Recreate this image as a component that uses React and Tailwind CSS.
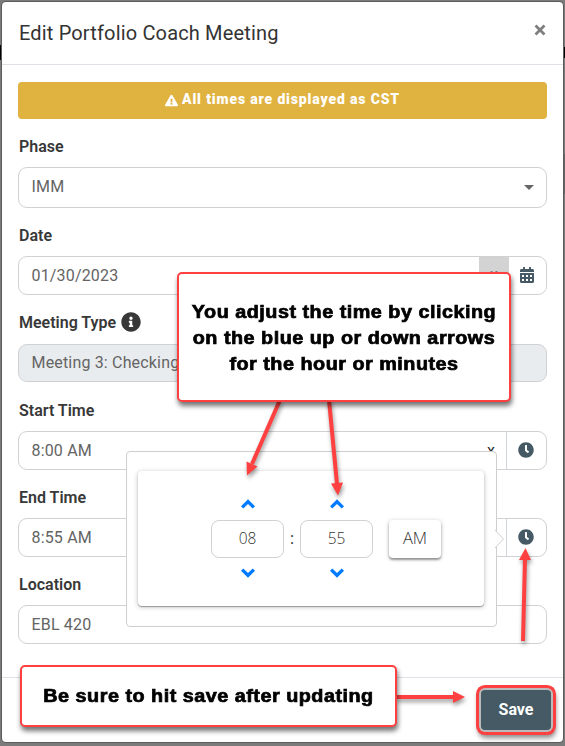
import React from 'react';
import clsx from 'clsx';
import { FaCalendarAlt, FaClock, FaExclamationTriangle, FaInfoCircle } from 'react-icons/fa';

const Label = ({ className, children }) => (
  <label
    className={clsx(
      'flex h-6 items-center mb-2 pl-px text-[16px] font-semibold text-[#383838]',
      className
    )}
  >
    {children}
  </label>
);

const Field = ({ value, className, children }) => (
  <div
    className={clsx(
      'flex items-stretch overflow-hidden rounded-[9px] border border-[#cfd1d3] text-[16px] tracking-[0.17px] text-[#646464]',
      className
    )}
  >
    <span className="flex flex-1 items-center pl-[12.500px] whitespace-nowrap">{value}</span>
    {children}
  </div>
);

const ClockButton = () => (
  <button className="flex w-10 items-center justify-center border-l border-[#ced4da] pb-0.5 pr-0.5 text-[#455a64]">
    <FaClock className="h-4 w-4" />
  </button>
);

const Chevron = ({ down }) => (
  <svg width="14" height="10" viewBox="0 0 14 10" className={down ? 'rotate-180' : ''}>
    <path d="M0 7.300 L7 0.300 L14 7.300 L11.700 9.600 L7 5 L2.300 9.600 Z" fill="#007bff" />
  </svg>
);

const Spinner = ({ value }) => (
  <div className="flex flex-col items-center">
    <Chevron />
    <span className="my-[10.500px] flex h-[38px] w-[73px] items-center justify-center rounded-lg border border-[#cfd1d3]">
      {value}
    </span>
    <Chevron down />
  </div>
);

const TimePicker = () => (
  <div className="absolute left-[126px] top-[451px] h-[176px] w-[371px] rounded border border-[#cfcfcf] bg-white p-[11px] pt-[19px]">
    <svg className="absolute -right-[9px] top-[78px]" width="10" height="18" viewBox="0 0 10 18">
      <path d="M0 0 L8.500 9 L0 18" fill="#fff" stroke="#cfcfcf" />
    </svg>
    <div className="flex h-[135px] w-[346px] items-center rounded bg-white pl-[73px] font-['Open_Sans','Noto_Sans',sans-serif] text-[15.500px] font-light text-[#333] shadow-[0_1px_1px_rgba(0,0,0,0.3),0_1px_5px_rgba(0,0,0,0.25)]">
      <Spinner value="08" />
      <span className="w-4 text-center font-normal">:</span>
      <Spinner value="55" />
      <button className="ml-4 h-[38px] w-[52px] rounded bg-white text-[16.500px] shadow-[0_2px_2px_rgba(0,0,0,0.3),0_1px_4px_rgba(0,0,0,0.25)]">
        AM
      </button>
    </div>
  </div>
);

const Callout = ({ className, children }) => (
  <div
    className={clsx(
      'absolute rounded-[5px] border-2 border-[#ff4040] bg-white shadow-[1px_4px_5px_rgba(0,0,0,0.55)]',
      className
    )}
  >
    <div className="flex scale-x-110 flex-col items-center font-['Liberation_Sans',Arial,sans-serif] text-[18px] font-bold leading-[26px] tracking-[0.45px] whitespace-nowrap text-black [-webkit-text-stroke:0.7px_black]">
      {children}
    </div>
  </div>
);

const Arrows = () => (
  <svg
    className="pointer-events-none absolute inset-0 drop-shadow-[1px_3px_2px_rgba(0,0,0,0.4)]"
    width="565"
    height="746"
    viewBox="0 0 565 746"
    stroke="#ff4040"
    fill="#ff4040"
  >
    <path d="M280 400 L252 464" strokeWidth="4" />
    <path d="M247 475.500 L246.500 461.500 L257.500 466.500 Z" stroke="none" />
    <path d="M329 400 L337 484" strokeWidth="4" />
    <path d="M338 495.500 L331 483.500 L343 482.500 Z" stroke="none" />
    <path d="M523 641 L525 558" strokeWidth="4" />
    <path d="M525.500 548 L519 560 L531 560 Z" stroke="none" />
    <path d="M396 697 L455 697" strokeWidth="4" />
    <path d="M465 697 L453 691 L453 703 Z" stroke="none" />
  </svg>
);

const App = () => {
  return (
    <div className="relative h-[746px] w-[565px] overflow-hidden bg-[#7b7b7b] px-0.5 pt-0.5 font-[Roboto,sans-serif]">
      <div className="absolute left-0 top-[45px] h-[15px] w-[3px] bg-black" />
      <div className="absolute right-0 top-[47px] h-[11px] w-[3px] bg-black" />
      <div className="absolute right-0 top-[154px] h-[40px] w-[3px] bg-[#646464]" />

      {/* Modal */}
      <div className="relative flex h-[740px] w-[561px] flex-col rounded bg-white shadow-[0_0_0_1px_#5c5c5c]">
        <header className="flex h-[63px] items-center justify-between border-b border-[#dee2e6] pl-[17px] pr-[17px]">
          <h5 className="text-[20px] tracking-[0.16px] text-[#333]">Edit Portfolio Coach Meeting</h5>
          <button className="mb-1.5" aria-label="Close">
            <svg width="12" height="12" viewBox="0 0 12 12" stroke="#7f7f7f" strokeWidth="2.800">
              <path d="M1.500 1.500 L10.500 10.500 M10.500 1.500 L1.500 10.500" />
            </svg>
          </button>
        </header>

        <main className="flex-1 px-4 pt-[17px]">
          <div className="mb-4 flex h-[37px] items-center justify-center gap-1 rounded bg-[#e0b240] pb-0.5 text-[14px] font-black tracking-[0.85px] text-white">
            <FaExclamationTriangle className="mt-0.5 h-[13px] w-[13px]" />
            All times are displayed as CST
          </div>

          <Label>Phase</Label>
          <Field value="IMM" className="mb-4 h-[41px] pb-px">
            <span className="mr-3 mt-px self-center border-x-5 border-t-5 border-x-transparent border-t-[#666]" />
          </Field>

          <Label>Date</Label>
          <Field value="01/30/2023" className="mb-4 h-[39px]">
            <span className="flex w-[30px] items-center justify-center bg-[#d3d3d3] pb-0.5 text-[#777]">x</span>
            <button className="flex w-[37px] items-center justify-center pb-0.5 pr-0.5 text-[#455a64]">
              <FaCalendarAlt className="h-4 w-4" />
            </button>
          </Field>

          <Label className="gap-1">
            Meeting Type <FaInfoCircle className="ml-px mb-0.5 h-5 w-5" />
          </Label>
          <Field value="Meeting 3: Checking" className="mb-[17px] mt-[9px] h-[38px] bg-[#e9ecef]" />

          <Label>Start Time</Label>
          <Field value="8:00 AM" className="mb-4 h-[39px]">
            <span className="flex w-[30px] items-center justify-center text-[#333]">x</span>
            <ClockButton />
          </Field>

          <Label>End Time</Label>
          <Field value="8:55 AM" className="mb-4 h-[39px]">
            <ClockButton />
          </Field>

          <Label>Location</Label>
          <Field value="EBL 420" className="h-[39px]" />
        </main>

        <footer className="flex h-[65px] items-start justify-end border-t border-[#dee2e6] pr-3 pt-3">
          <button className="h-10 w-[70px] rounded bg-[#455a64] text-[16px] font-bold text-white shadow-[0_0_0_2px_#bbb,0_0_0_5px_#ff4040,1px_4px_5px_4px_rgba(0,0,0,0.45)]">
            Save
          </button>
        </footer>
      </div>

      <TimePicker />
      <Arrows />
      <Callout className="left-[177px] top-[272px] h-[130px] w-[334px] pt-[25px]">
        <span>You adjust the time by clicking</span>
        <span>on the blue up or down arrows</span>
        <span>for the hour or minutes</span>
      </Callout>
      <Callout className="left-[20px] top-[665px] h-[62px] w-[377px] pt-[16px]">
        <span>Be sure to hit save after updating</span>
      </Callout>
    </div>
  );
};

export default App;
